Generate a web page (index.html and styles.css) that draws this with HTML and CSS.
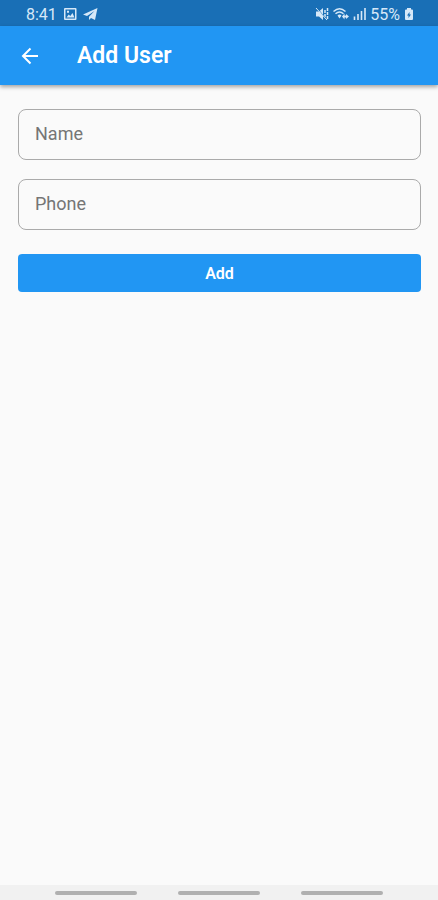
FILE: index.html
```html
<!DOCTYPE html>
<html lang="en">
<head>
  <meta charset="UTF-8" />
  <meta name="viewport" content="width=device-width, initial-scale=1.0" />
  <title>Add User</title>
  <link rel="stylesheet" href="styles.css">
</head>
<body>
  <div class="status-bar">
    <div class="status-group status-left">
      <span class="clock">8:41</span>
      <svg width="14" height="14" viewBox="0 0 14 14" aria-hidden="true">
        <path fill="currentColor" fill-rule="evenodd" d="M2 1h10.500a1 1 0 0 1 1 1v10a1 1 0 0 1-1 1H2a1 1 0 0 1-1-1V2a1 1 0 0 1 1-1zM2.500 2.500v9H12v-9zM3.500 10.500l2.200-3 1.600 1.500L9.500 6l2 4.500zM4 3.800h2v2H4z" />
      </svg>
      <svg width="15" height="14" viewBox="0 0 15 14" aria-hidden="true">
        <path fill="currentColor" d="M14.500 1L0 7.500l4 1.500 7.500-5L6 9.800V13l2-2 4 2z" />
      </svg>
    </div>
    <div class="status-group status-right">
      <svg width="14" height="14" viewBox="0 0 14 14" aria-hidden="true">
        <path fill="currentColor" d="M1 4.500h3L8 1v12L4 9.500H1z" />
        <path fill="none" stroke="currentColor" stroke-width="1.500" stroke-dasharray="3 1" d="M10 3v8M12.500 1v12" />
        <path stroke="#196fb6" d="M2 1l10 12" />
        <path stroke="currentColor" d="M1 1l11 12" />
      </svg>
      <svg width="16" height="14" viewBox="0 0 16 14" aria-hidden="true">
        <path fill="none" stroke="currentColor" stroke-width="1.400" d="M0.500 4.500Q6.500-1 12.500 4.500M2.500 6.800Q6.500 3 10.500 6.800" />
        <path fill="currentColor" d="M4.500 8.500q2-2 4 0l-2 3zM9 9.500l2.500-3v2H13v2h-1.500v2zM13 7l3 2.500-3 2.500z" />
      </svg>
      <svg width="13" height="14" viewBox="0 0 13 14" aria-hidden="true">
        <path fill="none" stroke="currentColor" stroke-width="1.600" d="M1.500 9.500V13M5 7v6M8.500 4v9M12 1v12" />
      </svg>
      <span class="battery-text">55%</span>
      <svg width="10" height="14" viewBox="0 0 10 14" aria-hidden="true">
        <path fill="currentColor" fill-rule="evenodd" d="M3 1h4v1.500h1a1 1 0 0 1 1 1V12a1 1 0 0 1-1 1H2a1 1 0 0 1-1-1V3.500a1 1 0 0 1 1-1h1zM5.500 5L3 8.500h1.500V11L7 7.500H5.500z" />
      </svg>
    </div>
  </div>

  <header class="app-bar">
    <a href="#" class="back-link" aria-label="Back">
      <svg width="18" height="18" viewBox="0 0 18 18" aria-hidden="true">
        <path fill="none" stroke="currentColor" stroke-width="2" d="M17 9H2M9.500 1.500L2 9l7.500 7.500" />
      </svg>
    </a>
    <h1>Add User</h1>
  </header>

  <main>
    <form class="user-form">
      <input type="text" id="name" name="name" placeholder="Name" aria-label="Name">
      <input type="tel" id="phone" name="phone" placeholder="Phone" aria-label="Phone">
      <button type="submit">Add</button>
    </form>
  </main>

  <div class="nav-bar">
    <span></span>
    <span></span>
    <span></span>
  </div>
</body>
</html>
```

FILE: styles.css
```css
* {
  box-sizing: border-box;
}

body {
  margin: 0;
  min-height: 100vh;
  display: flex;
  flex-direction: column;
  font-family: Roboto, "Liberation Sans", sans-serif;
  background-color: #fafafa;
}

.status-bar {
  display: flex;
  justify-content: space-between;
  align-items: center;
  height: 26px;
  padding: 2px 24px 0 26px;
  background-color: #196fb6;
  color: #d6e8f8;
  font-size: 16px;
}

.status-group {
  display: flex;
  align-items: center;
}

.status-left {
  gap: 6px;
}

.status-right {
  gap: 4px;
}

.app-bar {
  display: flex;
  align-items: center;
  gap: 38px;
  height: 59px;
  padding: 0 21px;
  background-color: #2196f3;
  color: #fff;
  box-shadow: 0 2px 4px rgba(0, 0, 0, 0.35);
}

.back-link {
  display: flex;
  color: #fff;
}

h1 {
  margin: 0;
  font-size: 23px;
  font-weight: 600;
}

main {
  flex: 1;
}

.user-form {
  display: flex;
  flex-direction: column;
  padding: 24px 17px 24px 18px;
}

.user-form input {
  width: 100%;
  height: 51px;
  margin-bottom: 19px;
  padding: 0 16px 2px;
  border: 1px solid #aaa;
  border-radius: 8px;
  background-color: transparent;
  color: #222;
  font-family: inherit;
  font-size: 18px;
}

.user-form input::placeholder {
  color: #757575;
  opacity: 1;
}

.user-form button {
  height: 38px;
  margin-top: 5px;
  border: none;
  border-radius: 4px;
  background-color: #2196f3;
  color: #fff;
  font-family: inherit;
  font-size: 16px;
  font-weight: 600;
  cursor: pointer;
}

.nav-bar {
  display: flex;
  justify-content: center;
  align-items: center;
  gap: 41px;
  height: 15px;
  background-color: #f1f1f1;
}

.nav-bar span {
  width: 82px;
  height: 4px;
  border-radius: 2px;
  background-color: #b0b0b0;
}
```
